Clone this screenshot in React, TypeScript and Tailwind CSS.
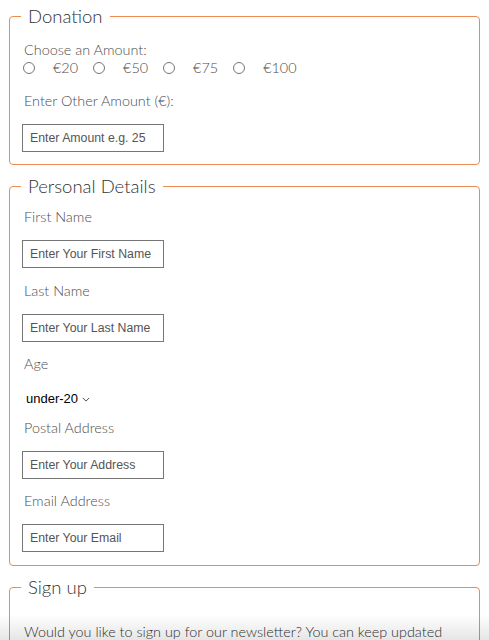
import type { ReactNode } from 'react';

/** Orange-bordered fieldset with a floating legend */
function Section({ title, children, className = '' }: { title: string; children: ReactNode; className?: string }) {
  return (
    <fieldset
      className={`mx-[9px] rounded-[4px] border-[1.5px] border-[#ee8a4f] px-[12px] ${className}`}
    >
      <legend className="-ml-[1px] px-[7px] text-[18.5px] leading-[22px] font-light text-[#333]">
        {title}
      </legend>
      {children}
    </fieldset>
  );
}

function Label({ children, className = '' }: { children: ReactNode; className?: string }) {
  return <div className={`pl-[2px] text-[14.4px] leading-[18px] font-light text-[#4d4d4d] ${className}`}>{children}</div>;
}

function TextBox({ placeholder, className = '' }: { placeholder: string; className?: string }) {
  return (
    <input
      type="text"
      placeholder={placeholder}
      className={`block h-[28px] w-[142px] border border-[#767676] bg-white px-[7px] font-['Liberation_Sans',Arial,sans-serif] text-[12.3px] text-black placeholder:text-[#555] ${className}`}
    />
  );
}

const AMOUNTS = ['€20', '€50', '€75', '€100'];

export default function App() {
  return (
    <div className="relative min-h-[640px] bg-white pt-[5px] font-['Lato',sans-serif]">
      {/* Donation */}
      <Section title="Donation" className="pt-[14px] pb-[12px]">
        <Label>Choose an Amount:</Label>
        <div className="flex h-[18px] items-center text-[14.4px] font-light text-[#4d4d4d]">
          {AMOUNTS.map((a, i) => (
            <label key={a} className="flex items-center">
              <span className={`h-[12px] w-[12px] rounded-full border border-[#767676] bg-white ${i === 0 ? 'ml-[1px]' : 'ml-[15px]'}`} />
              <span className="ml-[18px]">{a}</span>
            </label>
          ))}
        </div>
        <Label className="mt-[15px]">Enter Other Amount (€):</Label>
        <TextBox placeholder="Enter Amount e.g. 25" className="mt-[14px]" />
      </Section>

      {/* Personal Details */}
      <Section title="Personal Details" className="mt-[10px] pt-[11px] pb-[13px]">
        <Label>First Name</Label>
        <TextBox placeholder="Enter Your First Name" className="mt-[14px]" />
        <Label className="mt-[14px]">Last Name</Label>
        <TextBox placeholder="Enter Your Last Name" className="mt-[14px]" />
        <Label className="mt-[13px]">Age</Label>
        <div className="mt-[17px] flex h-[18px] items-center pl-[4px] font-['Liberation_Sans',Arial,sans-serif] text-[13px] text-black">
          under-20
          <svg viewBox="0 0 10 6" className="ml-[4px] h-[5px] w-[8px]" fill="none" stroke="#222" strokeWidth="1">
            <path d="M1 1l4 4 4-4" />
          </svg>
        </div>
        <Label className="mt-[11px]">Postal Address</Label>
        <TextBox placeholder="Enter Your Address" className="mt-[14px]" />
        <Label className="mt-[13px]">Email Address</Label>
        <TextBox placeholder="Enter Your Email" className="mt-[14px]" />
      </Section>

      {/* Sign up */}
      <Section title="Sign up" className="mt-[10px] pt-[22px] pb-[12px]">
        <p className="pl-[2px] text-[14.4px] leading-[24px] font-light text-[#333]">
          Would you like to sign up for our newsletter? You can keep updated with all our news and events.
        </p>
      </Section>

      {/* bottom fade of the browser viewport */}
      <div className="pointer-events-none fixed inset-x-0 bottom-0 h-[26px] bg-gradient-to-b from-transparent to-black/10" />
    </div>
  );
}
